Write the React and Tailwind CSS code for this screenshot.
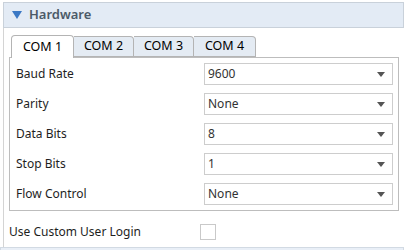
import React from 'react';

const rows = [
  { label: 'Baud Rate', value: '9600' },
  { label: 'Parity', value: 'None' },
  { label: 'Data Bits', value: '8' },
  { label: 'Stop Bits', value: '1' },
  { label: 'Flow Control', value: 'None' },
];

const tabs = [
  { name: 'COM 1', w: 'w-[63px]' },
  { name: 'COM 2', w: 'w-[60px]' },
  { name: 'COM 3', w: 'w-[60px]' },
  { name: 'COM 4', w: 'w-[62px]' },
];

const Caret = () => (
  <svg width="8" height="5" viewBox="0 0 8 5" className="shrink-0">
    <path d="M0 0 H8 L4 5 Z" fill="#555" />
  </svg>
);

const Select = ({ value }) => (
  <div className="w-[189px] h-[22px] border border-[#cdcdcd] bg-white flex items-center justify-between pl-[3px] pr-[7px] text-[12px] text-[#333]">
    <span>{value}</span>
    <Caret />
  </div>
);

export default function App() {
  return (
    <div className="w-[407px] h-[250px] bg-white overflow-hidden font-['Noto_Sans',sans-serif] text-[12px] text-[#1e1e1e] pt-[2px] pl-[3px] pr-[3px]">
      <div className="h-[26px] bg-[#e3ebf5] border border-[#c9d1da] flex items-center pl-[8px] gap-[7px]">
        <svg width="10" height="8" viewBox="0 0 10 8">
          <path d="M0 0 H10 L5 8 Z" fill="#3b78c4" />
        </svg>
        <span className="text-[13px] font-semibold text-[#4c5a68]">Hardware</span>
      </div>
      <div className="border-l border-[#d4d4d4] h-[219px] pt-[7px] flex flex-col">
        <div className="flex pl-[7px]">
          {tabs.map((t, i) => (
            <div
              key={t.name}
              className={
                i === 0
                  ? `${t.w} h-[23px] -mb-px relative z-10 bg-white border border-b-0 border-[#b4b4b4] rounded-t-[4px] flex items-center justify-center text-[12.5px] text-black`
                  : `${t.w} h-[21px] mt-[1px] bg-[#e4ebf3] border border-[#b4b4b4] border-l-0 rounded-tr-[4px] flex items-center justify-center text-[12.5px] text-black`
              }
            >
              {t.name}
            </div>
          ))}
        </div>
        <div className="ml-[5px] w-[390px] border border-[#bdbdbd] pt-[5px] pb-[5px] pl-[6px] pr-[5px] flex flex-col gap-[8px]">
          {rows.map((r) => (
            <div key={r.label} className="flex items-center justify-between h-[22px]">
              <span>{r.label}</span>
              <Select value={r.value} />
            </div>
          ))}
        </div>
        <div className="flex items-center justify-between h-[24px] mt-[9px] pl-[5px] w-[390px]">
          <span>Use Custom User Login</span>
          <div className="w-[16px] h-[16px] border border-[#c9c9c9] bg-white mr-[178px]" />
        </div>
      </div>
      <div className="h-[10px] bg-[#e9eff7] border border-[#d2dae3] -ml-[3px]" />
    </div>
  );
}
